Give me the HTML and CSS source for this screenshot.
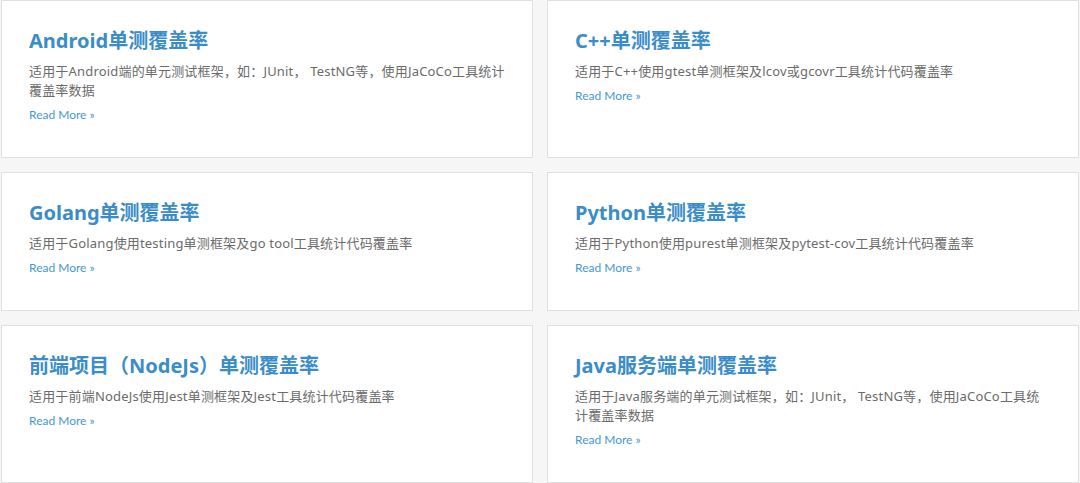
FILE: index.html
```html
<!DOCTYPE html>
<html lang="zh-CN">

<head>
    <meta charset="UTF-8" />
    <meta name="viewport" content="width=device-width, initial-scale=1.0" />
    <title>单测覆盖率</title>
    <link rel="stylesheet" href="styles.css">
</head>

<body>
    <div class="card-grid">
        <div class="card">
            <h2 class="card-title">Android单测覆盖率</h2>
            <p class="card-desc">适用于Android端的单元测试框架，如：JUnit， TestNG等，使用JaCoCo工具统计覆盖率数据</p>
            <a class="read-more" href="#">Read More »</a>
        </div>
        <div class="card">
            <h2 class="card-title">C++单测覆盖率</h2>
            <p class="card-desc">适用于C++使用gtest单测框架及lcov或gcovr工具统计代码覆盖率</p>
            <a class="read-more" href="#">Read More »</a>
        </div>
        <div class="card">
            <h2 class="card-title">Golang单测覆盖率</h2>
            <p class="card-desc">适用于Golang使用testing单测框架及go tool工具统计代码覆盖率</p>
            <a class="read-more" href="#">Read More »</a>
        </div>
        <div class="card">
            <h2 class="card-title">Python单测覆盖率</h2>
            <p class="card-desc">适用于Python使用purest单测框架及pytest-cov工具统计代码覆盖率</p>
            <a class="read-more" href="#">Read More »</a>
        </div>
        <div class="card">
            <h2 class="card-title">前端项目（NodeJs）单测覆盖率</h2>
            <p class="card-desc">适用于前端NodeJs使用Jest单测框架及Jest工具统计代码覆盖率</p>
            <a class="read-more" href="#">Read More »</a>
        </div>
        <div class="card">
            <h2 class="card-title">Java服务端单测覆盖率</h2>
            <p class="card-desc">适用于Java服务端的单元测试框架，如：JUnit， TestNG等，使用JaCoCo工具统计覆盖率数据</p>
            <a class="read-more" href="#">Read More »</a>
        </div>
    </div>
</body>

</html>
```

FILE: styles.css
```css
body {
    margin: 0;
    background-color: #f6f6f6;
    font-family: "Noto Sans", "Noto Sans CJK SC", sans-serif;
}

.card-grid {
    display: grid;
    grid-template-columns: 532px 532px;
    column-gap: 14px;
    row-gap: 14px;
    padding: 0 1px;
}

.card {
    background-color: #fff;
    border: 1px solid #e0e0e0;
    padding: 27px 27px 33px 27px;
}

.card-title {
    margin: 0;
    font-size: 20px;
    line-height: 26px;
    font-weight: 700;
    color: #3a8dc8;
}

.card-desc {
    margin: 8px 0 6px 0;
    font-size: 13px;
    line-height: 19px;
    letter-spacing: 0.18px;
    color: #6b6b6b;
}

.read-more {
    display: block;
    font-family: Lato, sans-serif;
    font-size: 12px;
    line-height: 18px;
    color: #4598d0;
    text-decoration: none;
}
```
